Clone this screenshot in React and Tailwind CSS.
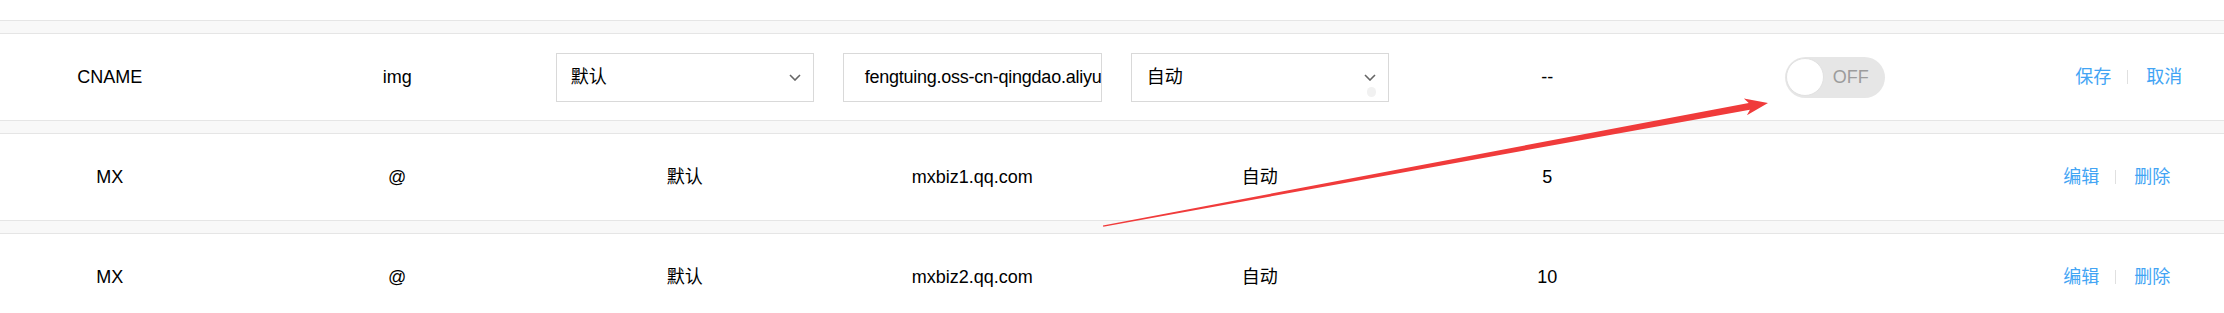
import React from 'react';

const rows = [
  { type: 'MX', host: '@', line: '默认', value: 'mxbiz1.qq.com', ttl: '自动', mx: '5' },
  { type: 'MX', host: '@', line: '默认', value: 'mxbiz2.qq.com', ttl: '自动', mx: '10' },
];

function Band() {
  return <div className="h-[14px] bg-[#f8f8f8] border-y border-[#e5e5e5]" />;
}

function Chevron() {
  return (
    <svg width="12" height="7" viewBox="0 0 12 7" className="shrink-0">
      <polyline points="1,1 6,6 11,1" fill="none" stroke="#666" strokeWidth="1.6" />
    </svg>
  );
}

function Select({ label, padLeft, blob }) {
  return (
    <div className={`relative w-[258px] h-[49px] border border-[#d9d9d9] bg-white flex items-center justify-between pr-[12px] ${padLeft}`}>
      <span>{label}</span>
      <Chevron />
      {blob && <span className="absolute right-[12px] top-[33px] w-[9px] h-[10px] rounded-full bg-[#f1f1f1]" />}
    </div>
  );
}

function Switch() {
  return (
    <div className="w-[100px] h-[41px] rounded-full bg-[#e6e6e6] flex items-center pl-[1px]">
      <span className="w-[38px] h-[38px] rounded-full bg-white border border-[#e2e2e2]" />
      <span className="ml-[9px] text-[#9c9c9c]">OFF</span>
    </div>
  );
}

function Actions({ a, b, shift }) {
  return (
    <div className={`flex items-center justify-center text-[#42a4f4] ${shift}`}>
      <span>{a}</span>
      <span className="ml-[16px] mr-[18px] w-px h-[14px] bg-[#e0e0e0]" />
      <span>{b}</span>
    </div>
  );
}

function Cell({ children, className = '' }) {
  return <div className={`flex items-center justify-center ${className}`}>{children}</div>;
}

export default function App() {
  return (
    <div className="relative w-full h-[313px] overflow-hidden bg-white text-black text-[18px] font-['Liberation_Sans','Noto_Sans_CJK_SC',sans-serif]">
      <div className="h-[20px]" />
      <Band />

      {/* editing row */}
      <div className="grid grid-cols-[253.5px_repeat(7,287.5px)] h-[86px] items-center">
        <Cell className="pr-[34px]">CNAME</Cell>
        <Cell>img</Cell>
        <Cell><Select label="默认" padLeft="pl-[14px]" /></Cell>
        <Cell>
          <div className="w-[259px] h-[49px] border border-[#d9d9d9] flex items-center pl-[21px] overflow-hidden whitespace-nowrap tracking-[-0.25px]">
            fengtuing.oss-cn-qingdao.aliyu
          </div>
        </Cell>
        <Cell><Select label="自动" padLeft="pl-[15px]" blob /></Cell>
        <Cell>--</Cell>
        <Cell><Switch /></Cell>
        <Actions a="保存" b="取消" shift="pl-[13px]" />
      </div>

      {rows.map((r, i) => (
        <React.Fragment key={i}>
          <Band />
          <div className="grid grid-cols-[253.5px_repeat(7,287.5px)] h-[86px] items-center">
            <Cell className="pr-[34px]">{r.type}</Cell>
            <Cell>{r.host}</Cell>
            <Cell>{r.line}</Cell>
            <Cell>{r.value}</Cell>
            <Cell>{r.ttl}</Cell>
            <Cell>{r.mx}</Cell>
            <Cell />
            <Actions a="编辑" b="删除" shift="pr-[11px]" />
          </div>
        </React.Fragment>
      ))}

      {/* annotation arrow */}
      <svg className="absolute left-0 top-0 pointer-events-none" width="2224" height="313">
        <polygon
          points="1102.9,225.5 1748.7,102.9 1743.9,98.6 1768,103 1746.9,115.2 1749.9,109.7 1103.3,226.8"
          fill="#f03b3b"
        />
      </svg>
    </div>
  );
}
